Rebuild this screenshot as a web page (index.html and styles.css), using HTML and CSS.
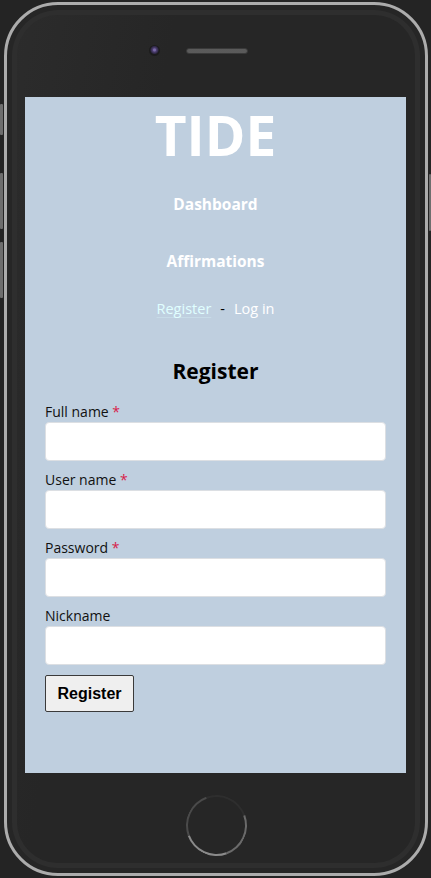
FILE: index.html
```html
<!DOCTYPE html>
<html lang="en">
<head>
<meta charset="utf-8">
<title>TIDE - Register</title>
<link rel="stylesheet" href="styles.css">
</head>
<body>
<div class="phone">
  <span class="side-btn side-l1"></span>
  <span class="side-btn side-l2"></span>
  <span class="side-btn side-l3"></span>
  <span class="side-btn side-r1"></span>
  <div class="bezel-top">
    <span class="camera"></span>
    <span class="speaker"></span>
  </div>
  <main class="screen">
    <h1 class="logo">TIDE</h1>
    <nav class="nav">
      <a class="nav-item" href="#">Dashboard</a>
      <a class="nav-item" href="#">Affirmations</a>
    </nav>
    <div class="auth">
      <a class="auth-reg" href="#">Register</a>
      <span class="auth-sep">-</span>
      <a class="auth-login" href="#">Log in</a>
    </div>
    <h2 class="title">Register</h2>
    <form class="form">
      <label class="label">Full name <span class="req">*</span></label>
      <input class="input" type="text">
      <label class="label">User name <span class="req">*</span></label>
      <input class="input" type="text">
      <label class="label">Password <span class="req">*</span></label>
      <input class="input" type="password">
      <label class="label">Nickname</label>
      <input class="input" type="text">
      <button class="btn" type="button">Register</button>
    </form>
  </main>
  <div class="bezel-bottom">
    <span class="home"></span>
  </div>
</div>
</body>
</html>
```
FILE: styles.css
```css
* { box-sizing: border-box; }
html, body { margin: 0; padding: 0; }
body {
  background: #242424;
  width: 431px;
  height: 878px;
  overflow: hidden;
  font-family: "Open Sans", "Noto Sans", sans-serif;
}
.phone {
  position: relative;
  margin: 2px 3px 0 4px;
  width: 424px;
  height: 874px;
  border: 3px solid #acacac;
  border-radius: 54px;
  background: linear-gradient(100deg, #2c2c2c 0%, #262626 30%, #262626 100%);
  box-shadow: inset 0 0 0 5px #262626, inset 0 0 0 10px #2e2e2e;
  display: flex;
  flex-direction: column;
  align-items: center;
}
.side-btn {
  position: absolute;
  width: 3px;
  background: #6e6e6e;
  border-radius: 1px;
}
.side-l1 { left: -7px; top: 99px; height: 31px; }
.side-l2 { left: -7px; top: 168px; height: 56px; }
.side-l3 { left: -7px; top: 237px; height: 56px; }
.side-r1 { right: -6px; top: 169px; height: 57px; width: 2px; }
.bezel-top {
  height: 92px;
  width: 100%;
  display: flex;
  justify-content: center;
  align-items: flex-start;
  padding-top: 39px;
  gap: 26px;
  padding-right: 36px;
}
.camera {
  width: 11px;
  height: 11px;
  border-radius: 50%;
  background: radial-gradient(circle at 50% 45%, #7a6aaa 0 1px, #4e4070 2px, #322a4a 3.5px, #1b1b1b 4.5px);
  margin-top: 1px;
}
.speaker {
  width: 62px;
  height: 6px;
  border-radius: 3px;
  margin-top: 4px;
  background-color: #474747;
  background-image: radial-gradient(circle, #666 0.6px, transparent 0.9px);
  background-size: 2px 2px;
  border: 1px solid #3a3a3a;
}
.screen {
  width: 381px;
  height: 676px;
  margin-right: 1px;
  background: #bfcfdf;
  display: flex;
  flex-direction: column;
  align-items: center;
  padding: 0 20px;
}
.logo {
  margin: 10px 0 0;
  font-size: 55px;
  line-height: 56px;
  font-weight: 700;
  color: #ffffff;
}
.nav {
  display: flex;
  flex-direction: column;
  align-items: center;
}
.nav-item {
  color: #ffffff;
  text-decoration: none;
  font-weight: 700;
  font-size: 15.5px;
  line-height: 20px;
  margin-top: 31px;
}
.nav-item + .nav-item { margin-top: 37px; }
.auth {
  margin-top: 28px;
  font-size: 14.5px;
  line-height: 20px;
  display: flex;
  gap: 9px;
}
.auth-reg {
  color: #e0ffff;
  text-decoration: underline;
  text-decoration-color: rgba(224, 255, 255, 0.25);
  text-underline-offset: 3px;
}
.auth-sep { color: #000; }
.auth-login { color: #ffffff; text-decoration: none; }
.title {
  margin: 37px 0 0;
  font-size: 21px;
  line-height: 30px;
  font-weight: 700;
  color: #000;
}
.form {
  align-self: stretch;
  display: flex;
  flex-direction: column;
  margin-top: 16px;
}
.label {
  font-size: 14px;
  line-height: 20px;
  color: #111;
}
.req { color: #d81b4a; }
.input {
  height: 39px;
  width: 100%;
  background: #fff;
  border: 1px solid #dcdfe3;
  border-radius: 4px;
  margin: 0 0 9px;
  font: inherit;
}
.form .input:last-of-type { margin-bottom: 10px; }
.btn {
  align-self: flex-start;
  width: 89px;
  height: 37px;
  background: #efefef;
  border: 1px solid #3a3a3a;
  border-radius: 2px;
  font-family: "Liberation Sans", Arial, sans-serif;
  font-weight: 700;
  font-size: 16px;
  color: #000;
  padding: 0;
}
.bezel-bottom {
  flex: 1;
  display: flex;
  justify-content: center;
  padding-top: 22px;
}
.home {
  width: 61px;
  height: 61px;
  border-radius: 50%;
  border: 2px solid;
  border-color: #2e2e2e #6a6a6a #8a8a8a #4a4a4a;
  transform: rotate(25deg);
}
```
